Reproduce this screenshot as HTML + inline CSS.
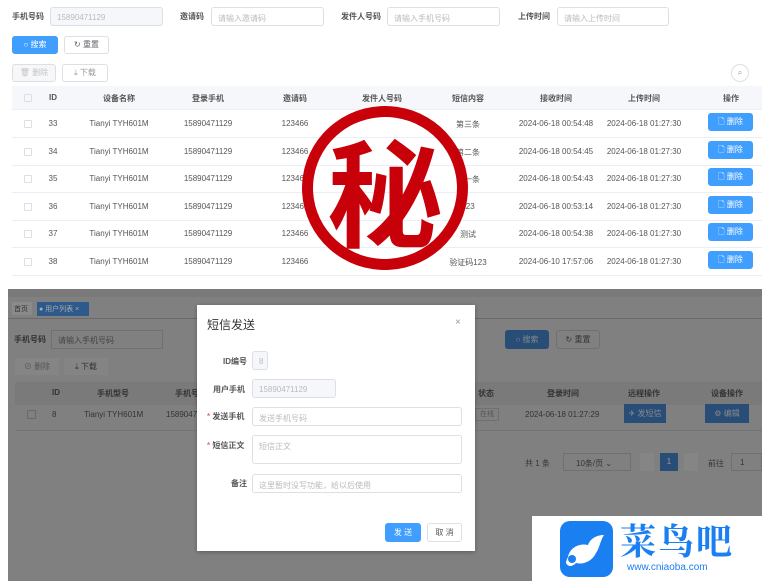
<!DOCTYPE html><html><head><meta charset="utf-8"><style>
*{margin:0;padding:0;box-sizing:border-box}
body{width:767px;height:586px;overflow:hidden;background:#fff;font-family:"Liberation Sans","Noto Sans CJK SC",sans-serif;font-size:8px;color:#606266;position:relative}
.a{position:absolute}
.lbl{font-weight:bold;color:#555;font-size:8px}
.inp{border:1px solid #dcdfe6;border-radius:3px;height:19px;color:#bbb;font-size:8px;padding:5px 6px;background:#fff}
.btn{border:1px solid #dcdfe6;border-radius:3px;height:18px;font-size:8px;text-align:center;line-height:16px}
.blue{background:#409eff;color:#fff;border-color:#409eff}
.c{text-align:center;white-space:nowrap}
.row{position:absolute;left:12px;width:750px;height:27px;border-bottom:1px solid #ebeef5}
.cb{position:absolute;width:8px;height:8px;border:1px solid #dcdfe6;border-radius:1px}
</style></head><body>
<div class="a lbl" style="left:12px;top:11px">手机号码</div>
<div class="a inp" style="left:50px;top:7px;width:113px;background:#f5f7fa">15890471129</div>
<div class="a lbl" style="left:180px;top:11px">邀请码</div>
<div class="a inp" style="left:211px;top:7px;width:113px">请输入邀请码</div>
<div class="a lbl" style="left:341px;top:11px">发件人号码</div>
<div class="a inp" style="left:387px;top:7px;width:113px">请输入手机号码</div>
<div class="a lbl" style="left:518px;top:11px">上传时间</div>
<div class="a inp" style="left:557px;top:7px;width:112px">请输入上传时间</div>
<div class="a btn blue" style="left:12px;top:36px;width:46px">○ 搜索</div>
<div class="a btn" style="left:64px;top:36px;width:45px">↻ 重置</div>
<div class="a btn" style="left:12px;top:64px;width:44px;color:#c0c4cc;background:#f7f7f7">🗑 删除</div>
<div class="a btn" style="left:62px;top:64px;width:46px;color:#999">⤓ 下载</div>
<div class="a" style="left:731px;top:64px;width:18px;height:18px;border:1px solid #dcdfe6;border-radius:50%;text-align:center;line-height:16px;color:#999">⌕</div>
<div class="a" style="left:12px;top:86px;width:750px;height:24px;background:#f5f7fa;border-bottom:1px solid #ebeef5"></div>
<div id="hdr"></div>
<div id="rows"></div>
<!-- stamp -->
<div class="a" style="left:302px;top:106px;width:166px;height:164px;border:11px solid #c8000a;border-radius:50%;transform:rotate(-3deg)"></div>
<div class="a" style="left:325px;top:128px;width:120px;height:120px;color:#c8000a;font-size:116px;font-weight:700;line-height:120px;text-align:center;font-family:'Noto Sans CJK SC',sans-serif">秘</div>
<!-- bottom gray -->
<div class="a" style="left:8px;top:289px;width:754px;height:292px;background:#808080"></div>
<div class="a" style="left:8px;top:289px;width:754px;height:8px;background:#7a7a7a"></div>
<div class="a" style="left:12px;top:302px;width:20px;height:13px;background:#8a8a8a;color:#333;font-size:7px;padding:2px">首页</div>
<div class="a" style="left:37px;top:302px;width:52px;height:14px;background:#2d5a8a;color:#aaa;font-size:7px;padding:2px">● 用户列表 ×</div>
<div class="a" style="left:8px;top:318px;width:754px;height:1px;background:#6a6a6a"></div>
<div class="a" style="left:14px;top:334px;color:#333;font-weight:bold">手机号码</div>
<div class="a" style="left:51px;top:330px;width:112px;height:19px;border:1px solid #707070;background:#808080;color:#444;padding:4px 6px">请输入手机号码</div>
<div class="a" style="left:505px;top:330px;width:44px;height:19px;background:#284e78;border-radius:3px;color:#888;text-align:center;line-height:19px">○ 搜索</div>
<div class="a" style="left:556px;top:330px;width:44px;height:19px;border:1px solid #707070;border-radius:3px;color:#333;text-align:center;line-height:17px">↻ 重置</div>
<div class="a" style="left:15px;top:358px;width:44px;height:17px;background:#858585;color:#555;text-align:center;line-height:17px">⊘ 删除</div>
<div class="a" style="left:64px;top:358px;width:44px;height:17px;background:#848484;color:#333;text-align:center;line-height:17px">⤓ 下载</div>
<div class="a" style="left:15px;top:382px;width:747px;height:23px;background:#7a7a7a"></div>
<div class="a" style="left:52px;top:388px;color:#333;font-weight:bold">ID</div>
<div class="a" style="left:97px;top:388px;color:#333;font-weight:bold">手机型号</div>
<div class="a" style="left:175px;top:388px;color:#333;font-weight:bold">手机号</div>
<div class="a" style="left:478px;top:388px;color:#333;font-weight:bold">状态</div>
<div class="a" style="left:547px;top:388px;color:#333;font-weight:bold">登录时间</div>
<div class="a" style="left:628px;top:388px;color:#333;font-weight:bold">远程操作</div>
<div class="a" style="left:711px;top:388px;color:#333;font-weight:bold">设备操作</div>
<div class="a" style="left:27px;top:410px;width:9px;height:9px;border:1px solid #6a6a6a"></div>
<div class="a" style="left:52px;top:410px;color:#333">8</div>
<div class="a" style="left:84px;top:410px;color:#333">Tianyi TYH601M</div>
<div class="a" style="left:166px;top:410px;color:#333">1589047</div>
<div class="a" style="left:475px;top:408px;width:24px;height:13px;border:1px solid #707070;color:#555;font-size:7px;text-align:center">在线</div>
<div class="a" style="left:525px;top:410px;color:#333">2024-06-18 01:27:29</div>
<div class="a" style="left:624px;top:404px;width:42px;height:19px;background:#284e78;color:#888;text-align:center;line-height:19px">✈ 发短信</div>
<div class="a" style="left:705px;top:404px;width:44px;height:19px;background:#284e78;color:#888;text-align:center;line-height:19px">⚙ 编辑</div>
<div class="a" style="left:15px;top:430px;width:747px;height:1px;background:#747474"></div>
<div class="a" style="left:525px;top:458px;color:#333">共 1 条</div>
<div class="a" style="left:563px;top:453px;width:68px;height:18px;border:1px solid #707070;color:#333;padding:4px 12px">10条/页 ⌄</div>
<div class="a" style="left:640px;top:453px;width:14px;height:18px;background:#858585"></div>
<div class="a" style="left:660px;top:453px;width:18px;height:18px;background:#284e78;color:#999;text-align:center;line-height:18px">1</div>
<div class="a" style="left:684px;top:453px;width:14px;height:18px;background:#858585"></div>
<div class="a" style="left:708px;top:458px;color:#333">前往</div>
<div class="a" style="left:731px;top:453px;width:31px;height:18px;border:1px solid #707070;color:#333;padding:4px 8px">1</div>
<!-- modal -->
<div class="a" style="left:197px;top:305px;width:278px;height:246px;background:#fff;box-shadow:0 1px 4px rgba(0,0,0,.3)">
<div class="a" style="left:10px;top:11px;font-size:12px;color:#333">短信发送</div>
<div class="a" style="left:258px;top:12px;font-size:10px;color:#999">×</div>
<div class="a" style="left:26px;top:51px;color:#555;font-weight:bold">ID编号</div>
<div class="a inp" style="left:55px;top:46px;width:16px;background:#f5f7fa">8</div>
<div class="a" style="left:16px;top:79px;color:#555;font-weight:bold">用户手机</div>
<div class="a inp" style="left:55px;top:74px;width:84px;background:#f5f7fa">15890471129</div>
<div class="a" style="left:10px;top:106px;color:#555;font-weight:bold"><span style="color:#f56c6c">*</span> 发送手机</div>
<div class="a inp" style="left:55px;top:102px;width:210px">发送手机号码</div>
<div class="a" style="left:10px;top:135px;color:#555;font-weight:bold"><span style="color:#f56c6c">*</span> 短信正文</div>
<div class="a inp" style="left:55px;top:130px;width:210px;height:29px">短信正文</div>
<div class="a" style="left:34px;top:173px;color:#555;font-weight:bold">备注</div>
<div class="a inp" style="left:55px;top:169px;width:210px">这里暂时没写功能，给以后使用</div>
<div class="a btn blue" style="left:188px;top:218px;width:36px;height:19px;line-height:17px">发 送</div>
<div class="a btn" style="left:230px;top:218px;width:35px;height:19px;line-height:17px;color:#555">取 消</div>
</div>
<!-- logo -->
<div class="a" style="left:532px;top:516px;width:230px;height:65px;background:#fff"></div>
<div class="a" style="left:560px;top:521px;width:53px;height:56px;background:#1a7ff0;border-radius:10px">
<svg width="53" height="56" viewBox="0 0 53 56"><path d="M8 36 C10 26 20 22 28 24 C30 18 36 14 44 14 C40 20 40 26 36 32 C32 40 24 44 16 42 C12 46 8 46 6 42 C6 40 7 38 8 36Z" fill="#fff"/><circle cx="12" cy="38" r="4" fill="#1a7ff0"/></svg></div>
<div class="a" style="left:620px;top:520px;font-size:36px;line-height:40px;color:#1a7ff0;font-weight:bold;letter-spacing:2px;font-family:'Noto Serif CJK SC',serif">菜鸟吧</div>
<div class="a" style="left:627px;top:562px;font-size:10px;color:#1a7ff0">www.cniaoba.com</div>
<script>
var cols=[[28,'',''],[53,'ID'],[119,'设备名称'],[208,'登录手机'],[295,'邀请码'],[382,'发件人号码'],[468,'短信内容'],[556,'接收时间'],[644,'上传时间'],[731,'操作']];
var h='';cols.forEach(function(c){if(c[1])h+='<div class="a c" style="left:'+(c[0]-40)+'px;width:80px;top:93px;font-weight:bold;color:#555">'+c[1]+'</div>'});
h+='<div class="cb" style="left:24px;top:94px"></div>';
document.getElementById('hdr').innerHTML=h;
var d=[[33,'第三条','2024-06-18 00:54:48'],[34,'第二条','2024-06-18 00:54:45'],[35,'第一条','2024-06-18 00:54:43'],[36,'123','2024-06-18 00:53:14'],[37,'测试','2024-06-18 00:54:38'],[38,'验证码123','2024-06-10 17:57:06']];
var r='';d.forEach(function(x,i){var y=111+i*27.5;r+='<div class="row" style="top:'+y+'px"></div>';var t=y+8;
r+='<div class="cb" style="left:24px;top:'+(t+1)+'px"></div>';
var v=[[53,x[0]],[119,'Tianyi TYH601M'],[208,'15890471129'],[295,'123466'],[468,x[1]],[556,x[2]],[644,'2024-06-18 01:27:30']];
v.forEach(function(c){r+='<div class="a c" style="left:'+(c[0]-50)+'px;width:100px;top:'+t+'px;color:#555">'+c[1]+'</div>'});
r+='<div class="a btn blue" style="left:708px;top:'+(y+2)+'px;width:45px;height:18px">🗋 删除</div>';});
document.getElementById('rows').innerHTML=r;
</script>
</body></html>
